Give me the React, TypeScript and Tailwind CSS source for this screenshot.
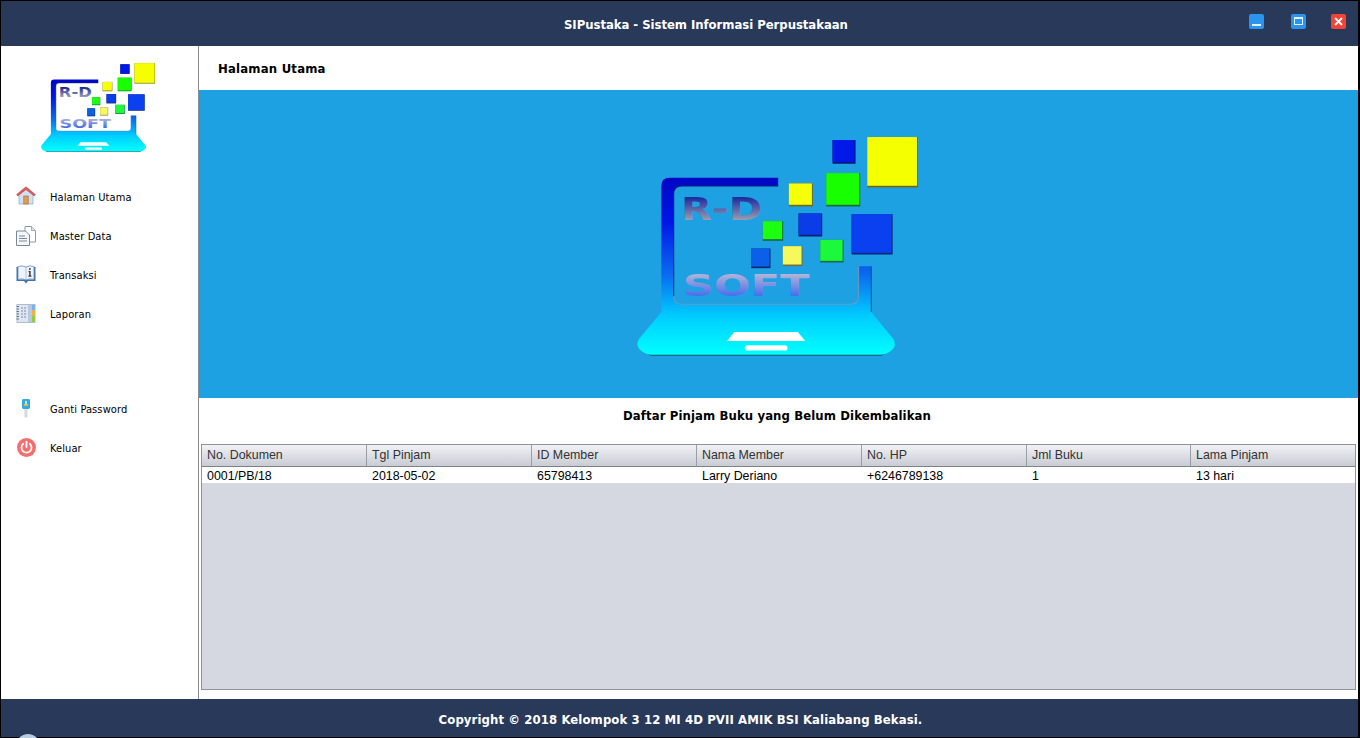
import React from 'react';

const COLUMNS = ['No. Dokumen', 'Tgl Pinjam', 'ID Member', 'Nama Member', 'No. HP', 'Jml Buku', 'Lama Pinjam'];
const ROW = ['0001/PB/18', '2018-05-02', '65798413', 'Larry Deriano', '+6246789138', '1', '13 hari'];

const SQUARES = [
  { x: 743, y: 36, w: 152, h: 151, fill: '#f6ff00', shade: '#6f6a10' },
  { x: 639, y: 45, w: 69, h: 71, fill: '#0018e8', shade: '#0a1a70' },
  { x: 620, y: 144, w: 102, h: 100, fill: '#18ff00', shade: '#1a6a30' },
  { x: 508, y: 175, w: 72, h: 69, fill: '#f6ff0a', shade: '#6f6a20' },
  { x: 537, y: 265, w: 71, h: 69, fill: '#0a3ce8', shade: '#0a2060' },
  { x: 696, y: 267, w: 123, h: 121, fill: '#0a40f0', shade: '#0a2878' },
  { x: 430, y: 288, w: 61, h: 59, fill: '#1cff10', shade: '#1a6a40' },
  { x: 602, y: 344, w: 70, h: 68, fill: '#1cf83c', shade: '#1a6a50' },
  { x: 395, y: 370, w: 58, h: 59, fill: '#0a60e8', shade: '#0a2a70' },
  { x: 490, y: 363, w: 59, h: 60, fill: '#f6f85c', shade: '#70703a' },
];

const RdSoftLogo = ({ id, className }: { id: string; className: string }) => (
  <svg viewBox="53 36 842 656" className={className}>
    <defs>
      <linearGradient id={`${id}-body`} gradientUnits="userSpaceOnUse" x1="0" y1="158" x2="0" y2="688">
        <stop offset="0" stopColor="#0006c4" />
        <stop offset="0.25" stopColor="#0016e6" />
        <stop offset="0.55" stopColor="#0a6cf0" />
        <stop offset="0.78" stopColor="#00ccff" />
        <stop offset="1" stopColor="#00ffff" />
      </linearGradient>
      <linearGradient id={`${id}-rd`} x1="0" y1="0" x2="0" y2="1">
        <stop offset="0.1" stopColor="#0a1a9c" />
        <stop offset="0.9" stopColor="#b4b4b4" />
      </linearGradient>
      <linearGradient id={`${id}-soft`} x1="0" y1="0" x2="0" y2="1">
        <stop offset="0.15" stopColor="#b6b6d6" />
        <stop offset="0.95" stopColor="#2c5cf4" />
      </linearGradient>
    </defs>
    {/* base shadow */}
    <path d="M60 652 Q62 678 95 691 L785 691 Q820 678 827 652 Z" fill="#0d5a70" />
    <path
      d="M126 182 Q126 158 150 158 L476 158 L476 183 L187 183 Q163 183 163 207 L163 513 Q163 537 187 537 L693 537 Q717 537 717 513 L717 423 L755 423 L755 560 L820 640 Q834 660 815 676 Q802 688 785 688 L95 688 Q78 688 65 676 Q46 660 60 640 L126 560 Z"
      fill={`url(#${id}-body)`}
    />
    <path d="M163 513 L163 207 Q163 183 187 183 L476 183" fill="none" stroke="#0a1f70" strokeWidth="3" />
    <path d="M163 513 Q163 537 187 537 L693 537 Q717 537 717 513 L717 423" fill="none" stroke="#6a9cc0" strokeWidth="3" />
    <path d="M755 423 L755 560" fill="none" stroke="#10507a" strokeWidth="3" />
    <path d="M345 620 L535 620 L557 647 L323 647 Z" fill="#ffffff" />
    <rect x="376" y="660" width="128" height="16" rx="8" fill="#ffffff" />
    <text
      x="185"
      y="286"
      fontFamily="'DejaVu Sans', sans-serif"
      fontWeight="700"
      fontSize="98"
      textLength="243"
      lengthAdjust="spacingAndGlyphs"
      fill={`url(#${id}-rd)`}
    >
      R-D
    </text>
    <text
      x="190"
      y="513"
      fontFamily="'DejaVu Sans', sans-serif"
      fontWeight="700"
      fontSize="92"
      textLength="380"
      lengthAdjust="spacingAndGlyphs"
      fill={`url(#${id}-soft)`}
    >
      SOFT
    </text>
    {SQUARES.map((s) => (
      <g key={`${s.x}-${s.y}`}>
        <rect x={s.x} y={s.y} width={s.w} height={s.h} fill={s.shade} />
        <rect x={s.x} y={s.y} width={s.w - 3} height={s.h - 5} fill={s.fill} />
      </g>
    ))}
  </svg>
);

const HomeIcon = () => (
  <svg viewBox="0 0 20 19" className="w-5 h-[19px]">
    <path d="M3 8 L10 2.5 L17 8 V18 H3 Z" fill="#cfe2f5" stroke="#8fb0d0" strokeWidth="0.8" />
    <path d="M0.6 8.5 L10 0.8 L19.4 8.5 L18.2 10 L10 3.6 L1.8 10 Z" fill="#dc5a5a" stroke="#b83a3a" strokeWidth="0.5" />
    <rect x="7.8" y="10" width="4.4" height="8" fill="#e59a4e" stroke="#a8703a" strokeWidth="0.7" />
  </svg>
);

const DocsIcon = () => (
  <svg viewBox="0 0 20 20" className="w-5 h-5">
    <path d="M9 0.5 H15.5 L19.5 4.5 V16 H9 Z" fill="#ffffff" stroke="#8a9aaa" strokeWidth="1" />
    <path d="M15.5 0.5 V4.5 H19.5" fill="#dde4ea" stroke="#8a9aaa" strokeWidth="0.8" />
    <path d="M0.5 5 H9.5 L13.5 9 V19.5 H0.5 Z" fill="#f4f6f8" stroke="#77889a" strokeWidth="1" />
    <path d="M3 10 H9 M3 12.5 H11 M3 15 H11" stroke="#77889a" strokeWidth="1" />
  </svg>
);

const BookIcon = () => (
  <svg viewBox="0 0 20 19" className="w-5 h-[19px]">
    <path d="M0.5 2 V16 H8 L10 18.5 L12 16 H19.5 V2 H18 V14.5 H2 V2 Z" fill="#3f74b4" />
    <path d="M2 1.5 Q6 0 10 2 Q14 0 18 1.5 V14.5 Q14 13 10 15 Q6 13 2 14.5 Z" fill="#eef3f8" stroke="#5a7ea8" strokeWidth="0.7" />
    <path d="M10 2 V15" stroke="#9ab0c8" strokeWidth="0.7" />
    <rect x="13" y="3.2" width="1.6" height="1.6" fill="#333333" />
    <path d="M12.6 6 H14.6 V10.6 H15.4 V11.8 H12.4 V10.6 H13.2 V7.2 H12.6 Z" fill="#333333" />
  </svg>
);

const NotebookIcon = () => (
  <svg viewBox="0 0 20 19" className="w-5 h-[19px]">
    <rect x="1" y="0.5" width="18" height="18" fill="#dfe6f2" stroke="#9fb0c8" strokeWidth="0.8" />
    <rect x="15.5" y="1" width="3.5" height="5" fill="#7ab0ee" />
    <rect x="15.5" y="6" width="3.5" height="6" fill="#f0b040" />
    <rect x="15.5" y="12" width="3.5" height="6" fill="#90cc40" />
    <rect x="12" y="1" width="3.5" height="17" fill="#b8c8e0" />
    <path d="M0.5 2.5 H3 M0.5 5 H3 M0.5 7.5 H3 M0.5 10 H3 M0.5 12.5 H3 M0.5 15 H3" stroke="#667788" strokeWidth="1" />
    <path d="M5 4 H11 M5 7 H11 M5 10 H11 M5 13 H11" stroke="#7f8fa8" strokeWidth="1.2" strokeDasharray="2 1" />
  </svg>
);

const KeyIcon = () => (
  <svg viewBox="0 0 8 19" className="w-2 h-[19px]">
    <path d="M2.4 9 H5.6 V18 L4 19 L2.4 18 Z" fill="#d8dbe0" />
    <rect x="0" y="0" width="8" height="10" rx="1.4" fill="#35a8e8" />
    <rect x="2" y="5" width="4" height="1.8" fill="#f2c040" />
    <rect x="3.2" y="2" width="1.6" height="3" fill="#e8f4fc" />
  </svg>
);

const PowerIcon = () => (
  <svg viewBox="0 0 19 19" className="w-[19px] h-[19px]">
    <circle cx="9.5" cy="9.5" r="9.5" fill="#f76d6d" />
    <path d="M6.2 5.8 A5 5 0 1 0 12.8 5.8" fill="none" stroke="#ffffff" strokeWidth="1.8" strokeLinecap="round" />
    <path d="M9.5 3.6 V9" stroke="#ffffff" strokeWidth="1.8" strokeLinecap="round" />
  </svg>
);

const NavItem = ({ icon, label }: { icon: React.ReactNode; label: string }) => (
  <div className="flex items-center h-[39px]">
    <div className="w-[49px] pl-[15px] pb-[2px] flex items-center">{icon}</div>
    <span className="pt-[2px] text-[11px] tracking-[0.1px] text-black font-['DejaVu_Sans_Condensed','DejaVu_Sans',sans-serif]">{label}</span>
  </div>
);

const WindowButton = ({ className, children }: { className: string; children: React.ReactNode }) => (
  <div className={`w-[15px] h-[15px] rounded-[2px] flex items-center justify-center ${className}`}>{children}</div>
);

export default function App() {
  return (
    <div className="relative w-[1360px] h-[738px] overflow-hidden flex flex-col bg-white border-l border-r-2 border-black font-['Liberation_Sans',sans-serif]">
      {/* title bar */}
      <header className="h-[46px] shrink-0 flex items-center bg-[#29395a] border-t border-black">
        <span className="ml-[563px] pt-[2px] text-[13px] tracking-[-0.05px] font-bold text-white font-['DejaVu_Sans_Condensed','DejaVu_Sans',sans-serif]">
          SIPustaka - Sistem Informasi Perpustakaan
        </span>
        <div className="ml-auto mr-[12px] mb-[5px] flex items-center">
          <WindowButton className="bg-[#2b95ee] items-end pb-[3px]">
            <div className="w-[9px] h-[2px] bg-[#dff0ff]" />
          </WindowButton>
          <WindowButton className="bg-[#2b95ee] ml-[27px]">
            <div className="w-[9px] h-[8px] border border-t-2 border-[#dff0ff]" />
          </WindowButton>
          <WindowButton className="bg-[#f44336] ml-[25px]">
            <svg viewBox="0 0 9 9" className="w-[9px] h-[9px]">
              <path d="M1 1 L8 8 M8 1 L1 8" stroke="#ffffff" strokeWidth="1.8" />
            </svg>
          </WindowButton>
        </div>
      </header>

      <div className="flex-1 flex min-h-0">
        {/* sidebar */}
        <aside className="w-[198px] shrink-0 border-r border-[#8c8c8c] flex flex-col">
          <div className="h-[132px] pt-[17px] pl-[40px]">
            <RdSoftLogo id="small" className="w-[114px] h-[89px]" />
          </div>
          <NavItem icon={<div className="pb-[2px]"><HomeIcon /></div>} label="Halaman Utama" />
          <NavItem icon={<DocsIcon />} label="Master Data" />
          <NavItem icon={<BookIcon />} label="Transaksi" />
          <NavItem icon={<NotebookIcon />} label="Laporan" />
          <div className="h-[56px]" />
          <NavItem icon={<div className="pl-[6px] pb-[1px]"><KeyIcon /></div>} label="Ganti Password" />
          <NavItem icon={<div className="pl-[1px]"><PowerIcon /></div>} label="Keluar" />
        </aside>

        {/* main */}
        <main className="flex-1 min-w-0 flex flex-col">
          <div className="h-[44px] shrink-0 flex items-center pl-[19px]">
            <span className="pt-[2px] text-[13px] tracking-[0.2px] font-bold text-black font-['DejaVu_Sans_Condensed','DejaVu_Sans',sans-serif]">Halaman Utama</span>
          </div>
          <div className="h-[308px] shrink-0 bg-[#1ea1e2] flex items-center justify-center pt-[5px] pr-[2px]">
            <RdSoftLogo id="large" className="w-[281px] h-[219px]" />
          </div>
          <div className="h-[34px] shrink-0 flex items-center justify-center pr-[3px]">
            <span className="pt-[1px] text-[13px] tracking-[0.1px] font-bold text-black font-['DejaVu_Sans_Condensed','DejaVu_Sans',sans-serif]">
              Daftar Pinjam Buku yang Belum Dikembalikan
            </span>
          </div>
          <div className="h-[12px] shrink-0" />
          <div className="h-[246px] shrink-0 mx-[2px] border border-[#8e929a] bg-[#d5d8e0] flex flex-col">
            <div className="grid grid-cols-[165px_165px_165px_165px_165px_164px_1fr] h-[22px] border-b border-[#7d8188] bg-gradient-to-b from-[#f2f2f6] to-[#c9ccd4]">
              {COLUMNS.map((col) => (
                <div key={col} className="pl-[5px] flex items-center text-[12.4px] text-[#333333] border-r border-[#9a9ea6] last:border-r-0">
                  {col}
                </div>
              ))}
            </div>
            <div className="grid grid-cols-[165px_165px_165px_165px_165px_164px_1fr] h-[16px] bg-white">
              {ROW.map((cell, i) => (
                <div key={i} className="pl-[5px] flex items-center text-[12.4px] text-black">
                  {cell}
                </div>
              ))}
            </div>
          </div>
        </main>
      </div>

      {/* footer */}
      <footer className="h-[39px] shrink-0 flex items-center justify-center bg-[#29395a] border-b border-black">
        <span className="pt-[3px] pl-[2px] text-[13px] tracking-[0.1px] font-bold text-white font-['DejaVu_Sans_Condensed','DejaVu_Sans',sans-serif]">
          Copyright © 2018 Kelompok 3 12 MI 4D PVII AMIK BSI Kaliabang Bekasi.
        </span>
      </footer>
      <div className="absolute left-[15px] top-[734px] w-[24px] h-[24px] rounded-full bg-[#b8cede]" />
    </div>
  );
}
